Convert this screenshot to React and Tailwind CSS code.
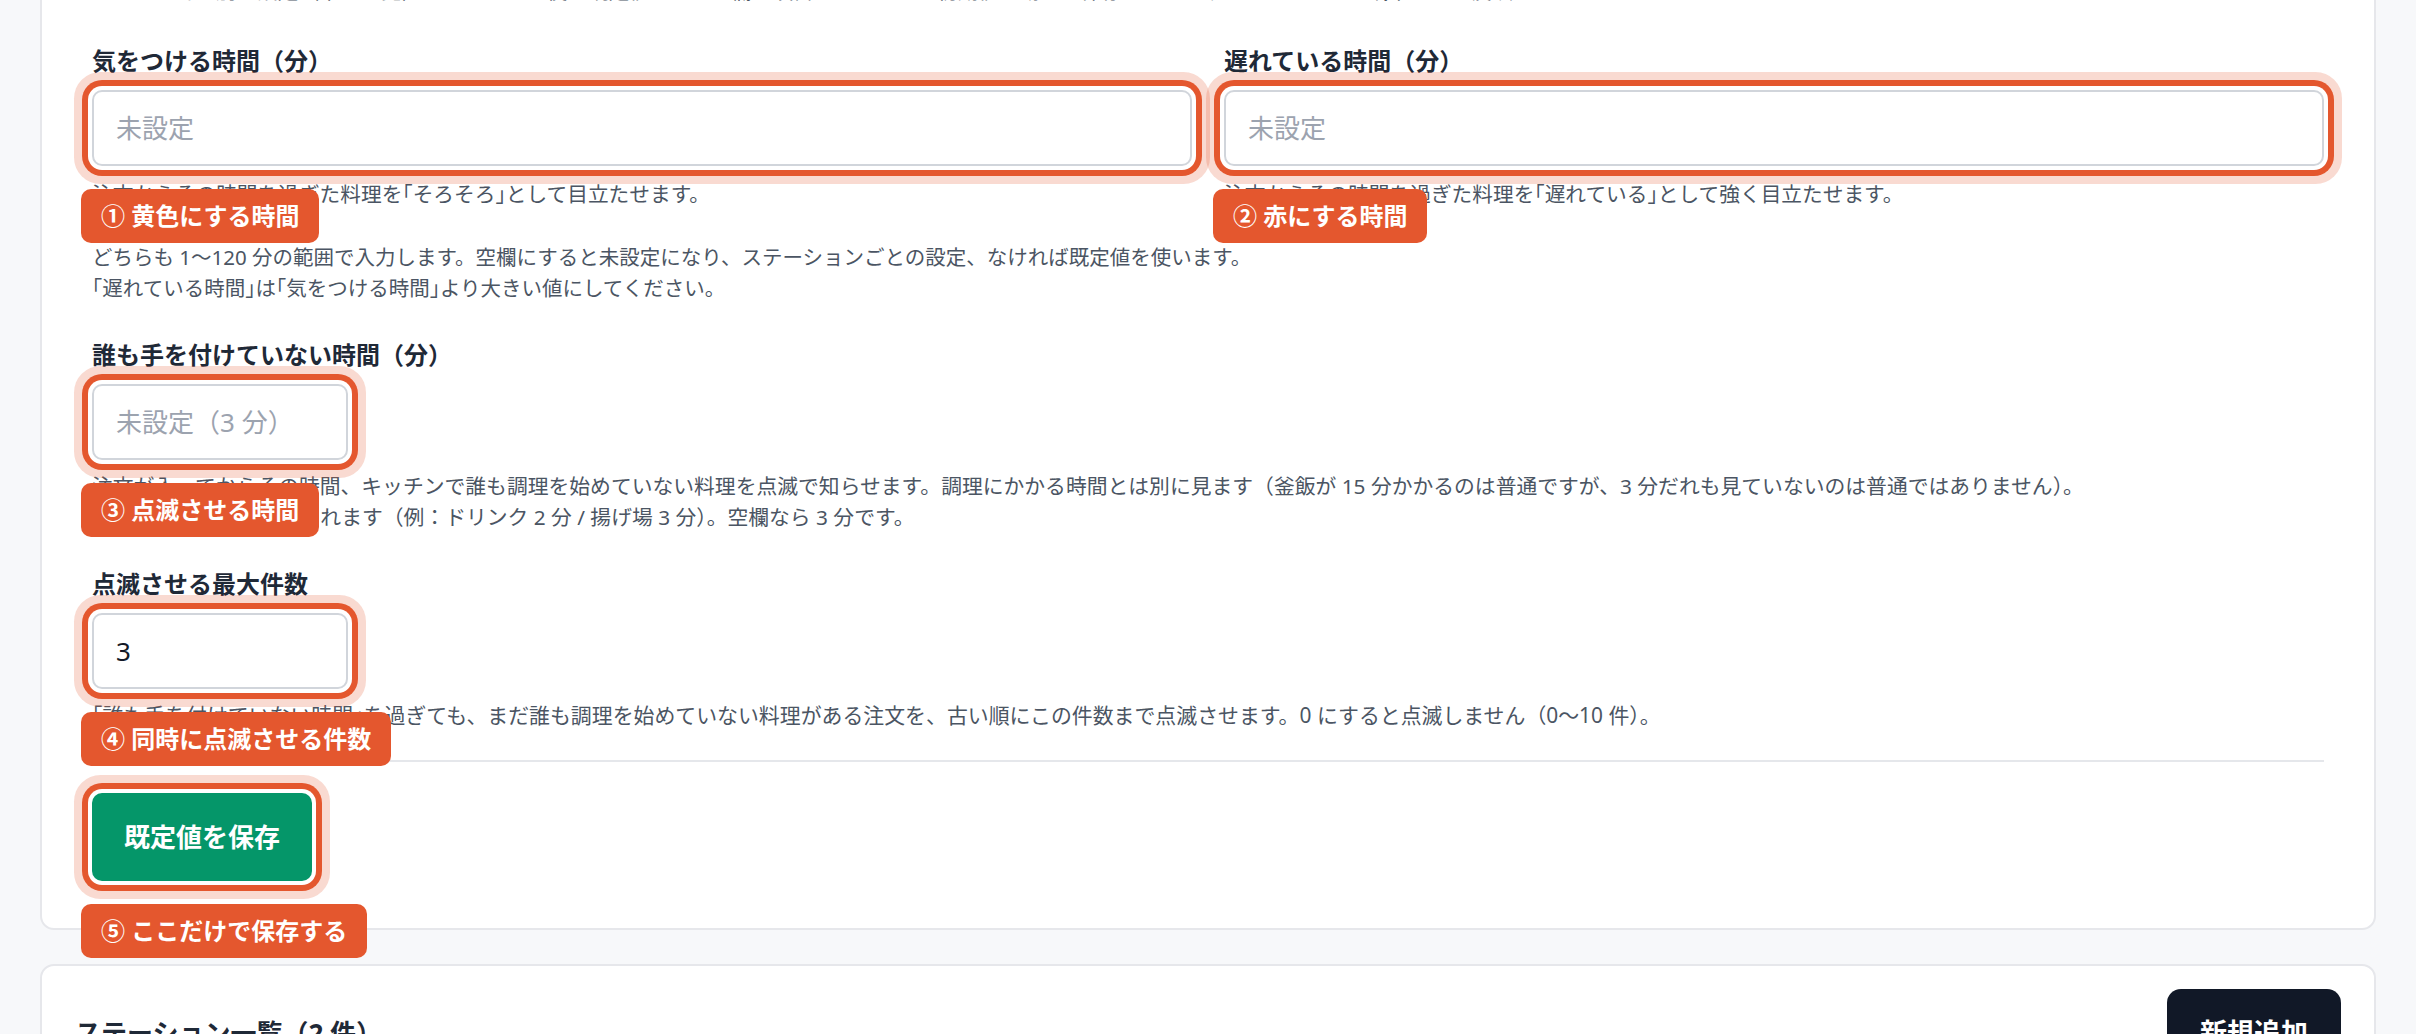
import React from "react";

const focusRing =
    "shadow-[0_0_0_4px_#ffffff,0_0_0_10px_#e4572e,0_0_0_18px_rgba(228,87,46,0.22)]";

// corner brackets are set half-width, the rest keeps full-width spacing
function Q({ children }) {
    return <span className="[font-feature-settings:'halt']">{children}</span>;
}

function Badge({ children }) {
    return (
        <span className="absolute left-[-11px] top-[calc(100%+23px)] z-10 whitespace-nowrap rounded-[10px] bg-[#e4572e] px-[20px] py-[11px] text-[24px] font-bold leading-[32px] text-white">
            {children}
        </span>
    );
}

function NumberField({ label, placeholder, value, badge, narrow }) {
    return (
        <div>
            <label className="block text-[24px] font-bold leading-[36px] text-[#1f2937]">
                {label}
            </label>
            <div className={"relative mt-[11px] " + (narrow ? "w-[256px]" : "w-full")}>
                <input
                    type="text"
                    readOnly
                    placeholder={placeholder}
                    defaultValue={value}
                    className={
                        "block h-[76px] w-full rounded-[10px] border-2 border-[#d1d5db] bg-white px-[22px] text-[26px] text-[#111827] placeholder:text-[#9ca3af] outline-none " +
                        focusRing
                    }
                />
                <Badge>{badge}</Badge>
            </div>
        </div>
    );
}

export default function App() {
    return (
        <div className="min-h-screen overflow-hidden bg-[#f7f8fa] px-[40px] pb-[60px] font-['Noto_Sans','Noto_Sans_CJK_JP',sans-serif]">
            {/* Default thresholds card */}
            <section className="-mt-[69px] rounded-[14px] border-2 border-[#e6e7eb] bg-white px-[50px] pb-[47px] pt-[43px]">
                <p className="text-[20.7px] leading-[30px] text-[#4b5563]">
                    ステーション別の設定（下の一覧）がないときに使う既定値です。空欄の項目はシステムの初期値で動き、保存するとキッチンのすべての端末にすぐ反映されます。
                </p>

                <div className="mt-[37px] grid grid-cols-2 gap-x-[32px]">
                    <div>
                        <NumberField
                            label="気をつける時間（分）"
                            placeholder="未設定"
                            badge="① 黄色にする時間"
                        />
                        <p className="mt-[13px] text-[20.7px] leading-[30px] text-[#4b5563]">
                            注文からその時間を過ぎた料理を<Q>「</Q>そろそろ<Q>」</Q>として目立たせます。
                        </p>
                    </div>
                    <div>
                        <NumberField
                            label="遅れている時間（分）"
                            placeholder="未設定"
                            badge="② 赤にする時間"
                        />
                        <p className="mt-[13px] text-[20.7px] leading-[30px] text-[#4b5563]">
                            注文からその時間を過ぎた料理を<Q>「</Q>遅れている<Q>」</Q>として強く目立たせます。
                        </p>
                    </div>
                </div>

                <p className="mt-[33px] text-[20.5px] leading-[31px] text-[#4b5563]">
                    どちらも 1〜120 分の範囲で入力します。空欄にすると未設定になり、ステーションごとの設定、なければ既定値を使います。
                    <br />
                    <Q>「</Q>遅れている時間<Q>」</Q>は<Q>「</Q>気をつける時間<Q>」</Q>より大きい値にしてください。
                </p>

                <div className="mt-[33px]">
                    <NumberField
                        label="誰も手を付けていない時間（分）"
                        placeholder="未設定（3 分）"
                        badge="③ 点滅させる時間"
                        narrow
                    />
                    <p className="mt-[11px] text-[20.8px] leading-[31px] text-[#4b5563]">
                        注文が入ってからその時間、キッチンで誰も調理を始めていない料理を点滅で知らせます。調理にかかる時間とは別に見ます（釜飯が 15 分かかるのは普通ですが、3 分だれも見ていないのは普通ではありません）。
                        <br />
                        ステーション別に変えられます（例：ドリンク 2 分 / 揚げ場 3 分）。空欄なら 3 分です。
                    </p>
                </div>

                <div className="mt-[33px]">
                    <NumberField
                        label="点滅させる最大件数"
                        value="3"
                        badge="④ 同時に点滅させる件数"
                        narrow
                    />
                    <p className="mt-[11px] text-[20.9px] leading-[30px] text-[#4b5563]">
                        <Q>「</Q>誰も手を付けていない時間<Q>」</Q>を過ぎても、まだ誰も調理を始めていない料理がある注文を、古い順にこの件数まで点滅させます。0 にすると点滅しません（0〜10 件）。
                    </p>
                </div>

                <div className="mt-[30px] border-t-2 border-[#e5e7eb] pt-[31px]">
                    <div className="relative inline-block">
                        <button
                            type="button"
                            className={
                                "h-[88px] rounded-[10px] bg-[#059669] px-[32px] text-[26px] font-bold text-white " +
                                focusRing
                            }
                        >
                            既定値を保存
                        </button>
                        <Badge>⑤ ここだけで保存する</Badge>
                    </div>
                </div>
            </section>

            {/* Station list card */}
            <section className="mt-[34px] rounded-[14px] border-2 border-[#e6e7eb] bg-white px-[33px] pt-[23px] pb-[30px]">
                <div className="flex items-center justify-between">
                    <h2 className="text-[26px] font-bold text-[#1f2937]">
                        ステーション一覧（2 件）
                    </h2>
                    <button
                        type="button"
                        className="h-[88px] rounded-[14px] bg-[#111827] px-[33px] text-[27px] font-bold text-white"
                    >
                        新規追加
                    </button>
                </div>
            </section>
        </div>
    );
}
